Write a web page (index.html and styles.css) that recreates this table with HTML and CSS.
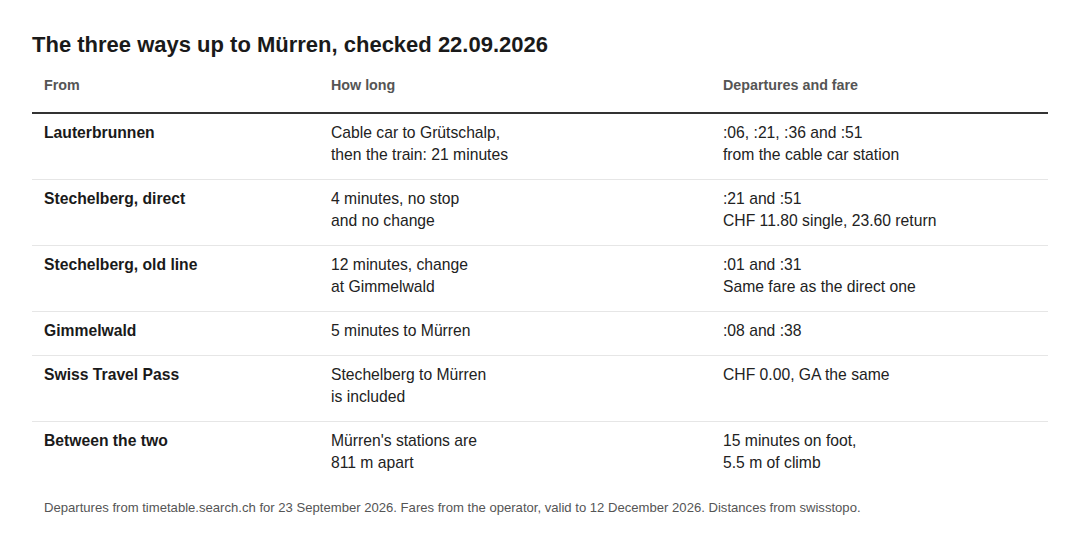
FILE: index.html
```html
<!DOCTYPE html>
<html lang="en">
<head>
<meta charset="utf-8">
<title>The three ways up to Mürren</title>
<link rel="stylesheet" href="styles.css">
</head>
<body>
<main class="page">
  <h1 class="title">The three ways up to Mürren, checked 22.09.2026</h1>
  <table class="routes">
    <colgroup>
      <col class="c-from">
      <col class="c-long">
      <col class="c-dep">
    </colgroup>
    <thead>
      <tr>
        <th>From</th>
        <th>How long</th>
        <th>Departures and fare</th>
      </tr>
    </thead>
    <tbody>
      <tr>
        <td class="from">Lauterbrunnen</td>
        <td>Cable car to Grütschalp,<br>then the train: 21 minutes</td>
        <td>:06, :21, :36 and :51<br>from the cable car station</td>
      </tr>
      <tr>
        <td class="from">Stechelberg, direct</td>
        <td>4 minutes, no stop<br>and no change</td>
        <td>:21 and :51<br>CHF 11.80 single, 23.60 return</td>
      </tr>
      <tr>
        <td class="from">Stechelberg, old line</td>
        <td>12 minutes, change<br>at Gimmelwald</td>
        <td>:01 and :31<br>Same fare as the direct one</td>
      </tr>
      <tr>
        <td class="from">Gimmelwald</td>
        <td>5 minutes to Mürren</td>
        <td>:08 and :38</td>
      </tr>
      <tr>
        <td class="from">Swiss Travel Pass</td>
        <td>Stechelberg to Mürren<br>is included</td>
        <td>CHF 0.00, GA the same</td>
      </tr>
      <tr>
        <td class="from">Between the two</td>
        <td>Mürren's stations are<br>811 m apart</td>
        <td>15 minutes on foot,<br>5.5 m of climb</td>
      </tr>
    </tbody>
  </table>
  <p class="note">Departures from timetable.search.ch for 23 September 2026. Fares from the operator, valid to 12 December 2026. Distances from swisstopo.</p>
</main>
</body>
</html>
```

FILE: styles.css
```css
html, body {
  margin: 0;
  padding: 0;
  background: #ffffff;
}

body {
  font-family: "Liberation Sans", Arial, sans-serif;
  color: #222222;
}

.page {
  padding: 32px 32px 0 32px;
  width: 1016px;
}

.title {
  margin: 0 0 9px 0;
  font-size: 22px;
  line-height: 26px;
  font-weight: 700;
  color: #1a1a1a;
}

.routes {
  width: 1016px;
  border-collapse: collapse;
  table-layout: fixed;
}

.c-from { width: 287px; }
.c-long { width: 392px; }
.c-dep { width: 337px; }

.routes th {
  text-align: left;
  font-size: 14.3px;
  line-height: 16px;
  font-weight: 700;
  color: #555555;
  padding: 10px 12px 19px 12px;
  border-bottom: 2px solid #333333;
}

.routes td {
  vertical-align: top;
  font-size: 15.7px;
  line-height: 22px;
  padding: 8px 12px 13px 12px;
  border-top: 1px solid #e6e6e6;
}

.routes tbody tr:first-child td {
  border-top: none;
}

.routes td.from {
  font-weight: 700;
  color: #1a1a1a;
}

.note {
  margin: 13px 0 0 0;
  padding: 0 12px;
  font-size: 13.1px;
  line-height: 16px;
  color: #555555;
}
```
